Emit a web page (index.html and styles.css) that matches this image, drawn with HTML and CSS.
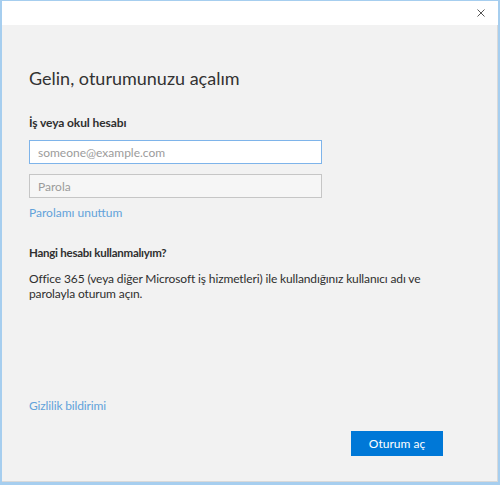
FILE: index.html
```html
<!DOCTYPE html>
<html lang="tr">
<head>
<meta charset="utf-8">
<title>Oturum aç</title>
<link rel="stylesheet" href="styles.css">
</head>
<body>
<div class="window">
  <div class="titlebar">
    <button class="close" aria-label="Kapat">
      <svg width="8" height="8" viewBox="0 0 8 8"><path d="M0.5 0.5 L7.5 7.5 M7.5 0.5 L0.5 7.5" stroke="#555" stroke-width="1" fill="none"/></svg>
    </button>
  </div>
  <div class="content">
    <h1 class="title">Gelin, oturumunuzu açalım</h1>
    <div class="label">İş veya okul hesabı</div>
    <input class="field field-focus" type="text" placeholder="someone@example.com">
    <input class="field field-pass" type="password" placeholder="Parola">
    <a class="link forgot" href="#">Parolamı unuttum</a>
    <div class="subhead">Hangi hesabı kullanmalıyım?</div>
    <p class="desc">Office 365 (veya diğer Microsoft iş hizmetleri) ile kullandığınız kullanıcı adı ve parolayla oturum açın.</p>
    <div class="footer">
      <a class="link privacy" href="#">Gizlilik bildirimi</a>
      <button class="primary">Oturum aç</button>
    </div>
  </div>
</div>
</body>
</html>
```
FILE: styles.css
```css
html, body {
  margin: 0;
  padding: 0;
}
body {
  width: 500px;
  height: 485px;
  overflow: hidden;
  font-family: Lato, "Open Sans", sans-serif;
  color: #2f2f2f;
}
.window {
  box-sizing: border-box;
  width: 500px;
  height: 485px;
  border-style: solid;
  border-color: #a6ceef;
  border-width: 1px 2px 3px 2px;
  display: flex;
  flex-direction: column;
  background: #f2f2f2;
}
.titlebar {
  height: 24px;
  background: #fff;
  display: flex;
  justify-content: flex-end;
  align-items: flex-start;
  flex: none;
}
.close {
  border: 0;
  background: transparent;
  padding: 0;
  margin: 8px 13px 0 0;
  width: 8px;
  height: 8px;
  display: flex;
}
.content {
  flex: 1;
  display: flex;
  flex-direction: column;
  align-items: flex-start;
  padding: 41px 0 0 27px;
  border-right: 1px solid #d9d9d9;
  border-bottom: 1px solid #d9d9d9;
}
.title {
  margin: 0;
  font-size: 18px;
  line-height: 24px;
  font-weight: 400;
  color: #333;
}
.label {
  margin-top: 25px;
  font-size: 12px;
  line-height: 16px;
  font-weight: 700;
  letter-spacing: -0.1px;
}
.field {
  box-sizing: border-box;
  width: 293px;
  height: 24px;
  margin: 9px 0 0 0;
  padding: 0 8px;
  font-family: inherit;
  font-size: 12px;
  outline: none;
}
.field::placeholder {
  color: #9b9b9b;
}
.field-focus {
  border: 1px solid #7eb4ea;
  background: #fff;
}
.field-pass {
  margin-top: 10px;
  border: 1px solid #c6c6c6;
  background: #f6f6f6;
}
.link {
  color: #62a2da;
  text-decoration: none;
  font-size: 12px;
  line-height: 16px;
}
.forgot {
  margin-top: 7px;
}
.subhead {
  margin-top: 24px;
  font-size: 11.5px;
  line-height: 16px;
  font-weight: 700;
  letter-spacing: -0.25px;
}
.desc {
  margin: 10px 0 0 0;
  width: 420px;
  font-size: 12px;
  line-height: 15px;
  letter-spacing: -0.13px;
}
.footer {
  margin-top: auto;
  align-self: stretch;
  display: flex;
  flex-direction: column;
  align-items: flex-start;
  padding-bottom: 25px;
}
.privacy {
  margin-bottom: 17px;
  letter-spacing: -0.15px;
}
.primary {
  align-self: flex-end;
  margin-right: 54px;
  width: 92px;
  height: 25px;
  border: 0;
  background: #0078d7;
  color: #fff;
  font-family: inherit;
  font-size: 12px;
  padding: 0;
}
```
